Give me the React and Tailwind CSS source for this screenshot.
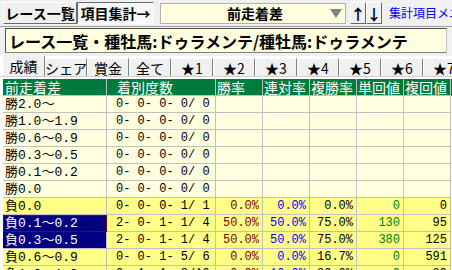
const cols = [
  { w: "w-[104px]" },
  { w: "w-[109px]" },
  { w: "w-[47px]" },
  { w: "w-[47px]" },
  { w: "w-[47px]" },
  { w: "w-[47px]" },
  { w: "w-[47px]" },
];

const headers = ["前走着差", "着別度数", "勝率", "連対率", "複勝率", "単回値", "複回値"];

const rows = [
  { label: "勝2.0〜", count: "0- 0- 0- 0/ 0" },
  { label: "勝1.0〜1.9", count: "0- 0- 0- 0/ 0" },
  { label: "勝0.6〜0.9", count: "0- 0- 0- 0/ 0" },
  { label: "勝0.3〜0.5", count: "0- 0- 0- 0/ 0" },
  { label: "勝0.1〜0.2", count: "0- 0- 0- 0/ 0" },
  { label: "勝0.0", count: "0- 0- 0- 0/ 0" },
  { label: "負0.0", count: "0- 0- 0- 1/ 1", hit: true, vals: ["0.0%", "0.0%", "0.0%", "0", "0"] },
  { label: "負0.1〜0.2", count: "2- 0- 1- 1/ 4", hit: true, sel: true, focus: true, vals: ["50.0%", "50.0%", "75.0%", "130", "95"] },
  { label: "負0.3〜0.5", count: "2- 0- 1- 1/ 4", hit: true, sel: true, vals: ["50.0%", "50.0%", "75.0%", "380", "125"] },
  { label: "負0.6〜0.9", count: "0- 0- 1- 5/ 6", hit: true, vals: ["0.0%", "0.0%", "16.7%", "0", "591"] },
  { label: "負1.0〜1.9", count: "0- 1- 1- 8/10", hit: true, vals: ["0.0%", "10.0%", "20.0%", "0", "39"] },
];

const valColors = ["text-[#800000]", "text-[#0000ff]", "text-black", "text-[#008000]", "text-black"];

const tabs = ["成績", "シェア", "賞金", "全て", "★1", "★2", "★3", "★4", "★5", "★6", "★7"];

const jp = "font-['Noto_Sans_CJK_JP',sans-serif]";
const mono = "font-['Liberation_Mono','Noto_Sans_CJK_JP',monospace]";

const raised =
  "shrink-0 h-[22px] bg-[#f0f0f0] border border-t-white border-l-white border-r-[#696969] border-b-[#696969] font-bold leading-none flex items-center justify-center whitespace-nowrap";

export default function App() {
  return (
    <div className={`w-[452px] h-[270px] overflow-hidden bg-[#f0f0f0] text-black ${jp}`}>
      {/* top bar */}
      <div className="flex items-center h-[27px] pl-[3px] border-b border-[#a0a0a0] overflow-hidden">
        <button className={`${raised} w-[74px] text-[14px]`}>レース一覧</button>
        <button className="shrink-0 w-[77px] h-[22px] bg-[#f7f7f7] border border-t-[#696969] border-l-[#696969] border-r-white border-b-white text-[14px] font-bold leading-none flex items-center justify-center whitespace-nowrap">
          項目集計→
        </button>
        <div className="shrink-0 ml-[6px] w-[186px] h-[21px] bg-[#ffffe0] border border-[#b0b0b0] flex items-center relative">
          <span className="ml-[66px] text-[14px] font-bold leading-none whitespace-nowrap">前走着差</span>
          <span className="absolute right-[3px] top-[5px] w-0 h-0 border-l-[6px] border-r-[6px] border-t-[9px] border-l-transparent border-r-transparent border-t-[#808080]" />
        </div>
        <div className="shrink-0 ml-[4px] flex">
          <button className={`${raised} w-[16px] text-[15px]`}>↑</button>
          <button className={`${raised} w-[16px] text-[15px]`}>↓</button>
        </div>
        <span className="shrink-0 ml-[7px] text-[12px] text-[#0000ff] whitespace-nowrap leading-none">集計項目メニュー</span>
      </div>

      {/* title */}
      <div className="mx-[5px] mt-[1px] h-[25px] bg-[#ffffe0] border border-t-[#505050] border-l-[#505050] border-r-[#c0c0c0] border-b-[#808080] flex items-center pl-[3px] overflow-hidden">
        <span className="text-[16px] font-bold leading-none whitespace-nowrap">
          レース一覧・種牡馬:ドゥラメンテ/種牡馬:ドゥラメンテ
        </span>
      </div>

      {/* tabs */}
      <div className="mt-[3px] h-[21px] flex items-end pl-[2px] bg-white border-b border-[#d0d0d0] overflow-hidden">
        {tabs.map((t, i) => (
          <div
            key={t}
            className={
              i === 0
                ? "w-[43px] shrink-0 h-[21px] bg-[#f0f0f0] border border-b-0 border-t-white border-l-white border-r-[#808080] text-[14px] leading-none flex items-center justify-center whitespace-nowrap"
                : "w-[42px] shrink-0 h-[18px] bg-[#f0f0f0] border border-b-0 border-t-white border-l-white border-r-[#808080] text-[14px] leading-none flex items-center justify-center whitespace-nowrap"
            }
          >
            {t}
          </div>
        ))}
      </div>

      {/* table */}
      <div className="bg-white pl-[3px] pt-[2px]">
        <div className="flex h-[17px] bg-[#007b3e] text-white text-[14px] leading-none">
          {headers.map((h, i) => (
            <div
              key={h}
              className={`${cols[i].w} shrink-0 border-r border-b border-[#c0c0c0] flex items-center whitespace-nowrap ${i === 0 ? "pl-[2px]" : i === 1 ? "pl-[10px]" : "pl-[1px]"}`}
            >
              {h}
            </div>
          ))}
        </div>
        {rows.map((r) => (
          <div key={r.label} className={`flex h-[17px] text-[12px] leading-none ${r.hit ? "bg-[#ffff88]" : "bg-[#ffffe0]"}`}>
            <div
              className={`${cols[0].w} shrink-0 border-r border-b border-[#c0c0c0] flex items-center pl-[2px] whitespace-nowrap ${mono} ${
                r.sel ? "bg-[#000080] text-white" : ""
              } ${r.focus ? "outline outline-1 -outline-offset-1 outline-[#800000]" : ""}`}
            >
              <span className="text-[13px]">{r.label}</span>
            </div>
            <div className={`${cols[1].w} shrink-0 border-r border-b border-[#c0c0c0] flex items-center pl-[9px] whitespace-pre ${mono}`}>
              {r.count}
            </div>
            {[0, 1, 2, 3, 4].map((k) => (
              <div
                key={k}
                className={`${cols[k + 2].w} shrink-0 border-r border-b border-[#c0c0c0] flex items-center justify-end pr-[3px] whitespace-nowrap ${mono} ${valColors[k]}`}
              >
                {r.vals ? r.vals[k] : ""}
              </div>
            ))}
          </div>
        ))}
      </div>
    </div>
  );
}
